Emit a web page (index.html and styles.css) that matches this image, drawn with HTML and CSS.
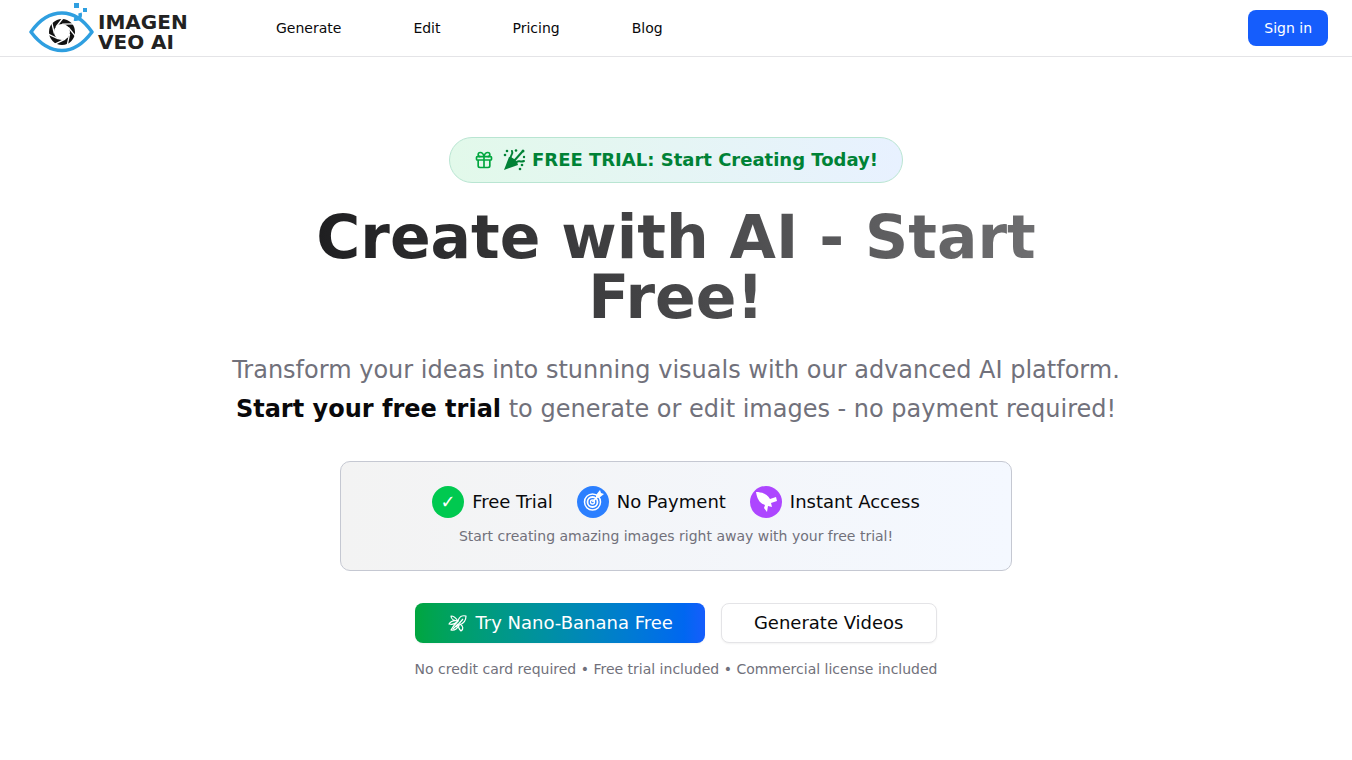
FILE: index.html
```html
<!DOCTYPE html>
<html lang="en">
<head>
  <meta charset="UTF-8">
  <meta name="viewport" content="width=device-width, initial-scale=1.0">
  <title>Imagen Veo AI</title>
  <link rel="stylesheet" href="styles.css">
</head>
<body>
  <!-- Header -->
  <header class="header">
    <a class="logo" href="#">
      <svg class="logo-eye" viewBox="0 0 66 54" aria-hidden="true">
        <path d="M3 31C12 18 22 12 34 12C46 12 55 18 64 31C55 43 46 49.500 34 49.500C22 49.500 12 43 3 31Z" fill="none" stroke="#2f9fe0" stroke-width="3.500" stroke-linejoin="round"/>
        <path d="M46 18C51 19 53 16 52 12" fill="none" stroke="#2f9fe0" stroke-width="3.500"/>
        <path d="M46 2h5v5h-5zM55 7h4v4h-4z" fill="#2f9fe0"/>
        <circle cx="34" cy="31" r="10.500" fill="none" stroke="#111" stroke-width="5"/>
        <g stroke="#fff" stroke-width="1.300">
          <path id="slit" d="M35 17L28 26"/>
          <use href="#slit" transform="rotate(51 34 31)"/>
          <use href="#slit" transform="rotate(103 34 31)"/>
          <use href="#slit" transform="rotate(154 34 31)"/>
          <use href="#slit" transform="rotate(206 34 31)"/>
          <use href="#slit" transform="rotate(257 34 31)"/>
          <use href="#slit" transform="rotate(309 34 31)"/>
        </g>
      </svg>
      <span class="logo-text">
        <span>IMAGEN</span>
        <span>VEO AI</span>
      </span>
    </a>
    <nav class="nav">
      <a href="#">Generate</a>
      <a href="#">Edit</a>
      <a href="#">Pricing</a>
      <a href="#">Blog</a>
    </nav>
    <button class="sign-in" type="button">Sign in</button>
  </header>

  <!-- Hero -->
  <main class="hero">
    <div class="badge">
      <svg class="icon-gift" viewBox="0 0 24 24" aria-hidden="true">
        <rect x="3" y="8" width="18" height="4" rx="1"/>
        <path d="M12 8v13M19 12v7a2 2 0 0 1-2 2H7a2 2 0 0 1-2-2v-7M7.500 8a2.500 2.500 0 0 1 0-5C11 3 12 8 12 8s1-5 4.500-5a2.500 2.500 0 0 1 0 5"/>
      </svg>
      <span class="badge-text">
        <svg class="icon-party" viewBox="0 0 24 24" aria-hidden="true">
          <path d="M7 9L2 22L16 17C15 13 11 9 7 9Z" fill="currentColor"/>
          <g fill="none" stroke="currentColor" stroke-linecap="round">
            <path d="M9 11C7 7 12 7 10 3M12 13L20 4M14 15C16 11 18 15 22 13" stroke-width="2"/>
          </g>
          <g fill="currentColor">
            <circle cx="3" cy="7" r="1.300"/>
            <circle cx="5" cy="3" r="1.300"/>
            <circle cx="14" cy="2.500" r="1.300"/>
            <circle cx="21" cy="3" r="1.500"/>
            <circle cx="22" cy="9" r="1.200"/>
            <circle cx="20" cy="17" r="1.300"/>
            <circle cx="18" cy="21" r="1.300"/>
          </g>
        </svg>
        FREE TRIAL: Start Creating Today!
      </span>
    </div>

    <h1 class="title">Create with AI - Start Free!</h1>

    <p class="lead">
      Transform your ideas into stunning visuals with our advanced AI platform.
      <strong>Start your free trial</strong> to generate or edit images - no payment required!
    </p>

    <section class="card">
      <ul class="features">
        <li><span class="dot dot-green">✓</span>Free Trial</li>
        <li>
          <span class="dot dot-blue">
            <svg viewBox="0 0 32 32" aria-hidden="true">
              <g fill="none" stroke="#fff">
                <circle cx="15.500" cy="16" r="8" stroke-width="1.500"/>
                <circle cx="15.500" cy="16" r="5" stroke-width="1.800"/>
                <circle cx="15.500" cy="16" r="2" stroke-width="1.300"/>
                <path d="M15.500 16L23 8" stroke-width="1.800"/>
              </g>
              <path d="M19 9l4-5 1 3 3 1-5 4-3-1z" fill="#fff"/>
            </svg>
          </span>No Payment
        </li>
        <li>
          <span class="dot dot-purple">
            <svg viewBox="0 0 32 32" aria-hidden="true">
              <path d="M6 6C12 6 17 8 20 13L26 11L27 15L21 17L22 21L18 20L17 26L14 22L15 19C9 17 7 12 6 6Z" fill="#fff"/>
            </svg>
          </span>Instant Access
        </li>
      </ul>
      <p class="card-note">Start creating amazing images right away with your free trial!</p>
    </section>

    <div class="actions">
      <button class="btn btn-primary" type="button">
        <svg class="icon-banana" viewBox="0 0 22 22" aria-hidden="true">
          <g fill="none" stroke="currentColor" stroke-width="1.200" stroke-linejoin="round">
            <path d="M19 4C15 3 12 5 11 9C8 12 6 14 4 18C8 19 10 17 12 13C16 12 19 9 19 4Z"/>
            <path d="M11 9C9 6 7 4 4 4C4 7 7 9 11 9C7 8 4 9 2 12C6 13 8 12 10 10"/>
            <path d="M12 13C11 15 12 17 14 19C17 17 16 14 13 12"/>
            <path d="M9 15L16 7M6 17L11 12"/>
          </g>
        </svg>
        Try Nano-Banana Free
      </button>
      <button class="btn btn-outline" type="button">Generate Videos</button>
    </div>
    <p class="fine-print">No credit card required • Free trial included • Commercial license included</p>
  </main>
</body>
</html>
```
FILE: styles.css
```css
* {
  box-sizing: border-box;
}
body {
  margin: 0;
  font-family: "DejaVu Sans", sans-serif;
  font-size: 14px;
  line-height: 20px;
  color: #09090b;
  background-color: #fff;
}
a {
  color: inherit;
  text-decoration: none;
}
p, h1, ul {
  margin: 0;
  padding: 0;
}
button {
  font-family: inherit;
  cursor: pointer;
}

/* Header */
.header {
  display: flex;
  align-items: center;
  height: 57px;
  padding: 0 24px 0 28px;
  border-bottom: 1px solid #e4e4e7;
}
.logo {
  display: flex;
  align-items: center;
  gap: 4px;
  width: 176px;
}
.logo-eye {
  width: 66px;
  height: 54px;
}
.logo-text {
  display: flex;
  flex-direction: column;
  padding-top: 8px;
  font-size: 20px;
  font-weight: bold;
  line-height: 20px;
  color: #222;
  white-space: nowrap;
}
.nav {
  display: flex;
  gap: 72px;
  margin-left: 72px;
}
.sign-in {
  height: 36px;
  margin-left: auto;
  padding: 0 16px;
  border: none;
  border-radius: 8px;
  font-size: 14px;
  color: #fff;
  background-color: #155dfc;
}

/* Hero */
.hero {
  display: flex;
  flex-direction: column;
  align-items: center;
  max-width: 944px;
  margin: 0 auto;
  padding: 80px 24px;
  text-align: center;
}
.badge {
  display: flex;
  align-items: center;
  gap: 8px;
  padding: 8px 24px;
  border: 1px solid #b9e5d2;
  border-radius: 24px;
  font-size: 18px;
  font-weight: bold;
  line-height: 28px;
  color: #008236;
  background-image: linear-gradient(to right, #e2f9ea, #e8f1ff);
}
.badge-text {
  display: flex;
  align-items: center;
  gap: 6px;
}
.icon-gift {
  width: 20px;
  height: 20px;
  fill: none;
  stroke: #00a63e;
  stroke-width: 2;
}
.icon-party {
  width: 24px;
  height: 24px;
}
.title {
  width: 100%;
  margin-top: 24px;
  padding: 0 64px;
  font-size: 60px;
  line-height: 60px;
  color: transparent;
  background-image: linear-gradient(to right, #151517, #78787a);
  background-clip: text;
}
.lead {
  margin-top: 24px;
  font-size: 24px;
  line-height: 39px;
  color: #71717b;
}
.lead strong {
  color: #09090b;
}
.card {
  width: 100%;
  max-width: 672px;
  margin-top: 32px;
  padding: 24px;
  border: 1px solid #c5c8d2;
  border-radius: 10px;
  background-image: linear-gradient(to right, #f3f3f3, #f4f8ff);
}
.features {
  display: flex;
  justify-content: center;
  gap: 24px;
  list-style: none;
  font-size: 18px;
  line-height: 28px;
}
.features li {
  display: flex;
  align-items: center;
  gap: 8px;
}
.dot {
  display: flex;
  align-items: center;
  justify-content: center;
  width: 32px;
  height: 32px;
  border-radius: 50%;
  color: #fff;
}
.dot-green {
  background-color: #00c950;
}
.dot-blue {
  background-color: #2b7fff;
}
.dot-purple {
  background-color: #ad46ff;
}
.card-note {
  margin-top: 8px;
  color: #71717b;
}
.actions {
  display: flex;
  gap: 16px;
  margin-top: 32px;
}
.btn {
  display: flex;
  align-items: center;
  gap: 6px;
  height: 40px;
  padding: 0 32px;
  border: 1px solid #e4e4e7;
  border-radius: 8px;
  font-size: 18px;
  line-height: 28px;
  color: #09090b;
  background-color: #fff;
  box-shadow: 0 1px 2px rgba(0, 0, 0, 0.05);
}
.btn-primary {
  border: none;
  color: #fff;
  background-image: linear-gradient(to right in oklab, #00a63e, #155dfc);
}
.icon-banana {
  width: 22px;
  height: 22px;
}
.fine-print {
  margin-top: 16px;
  color: #71717b;
}
```
